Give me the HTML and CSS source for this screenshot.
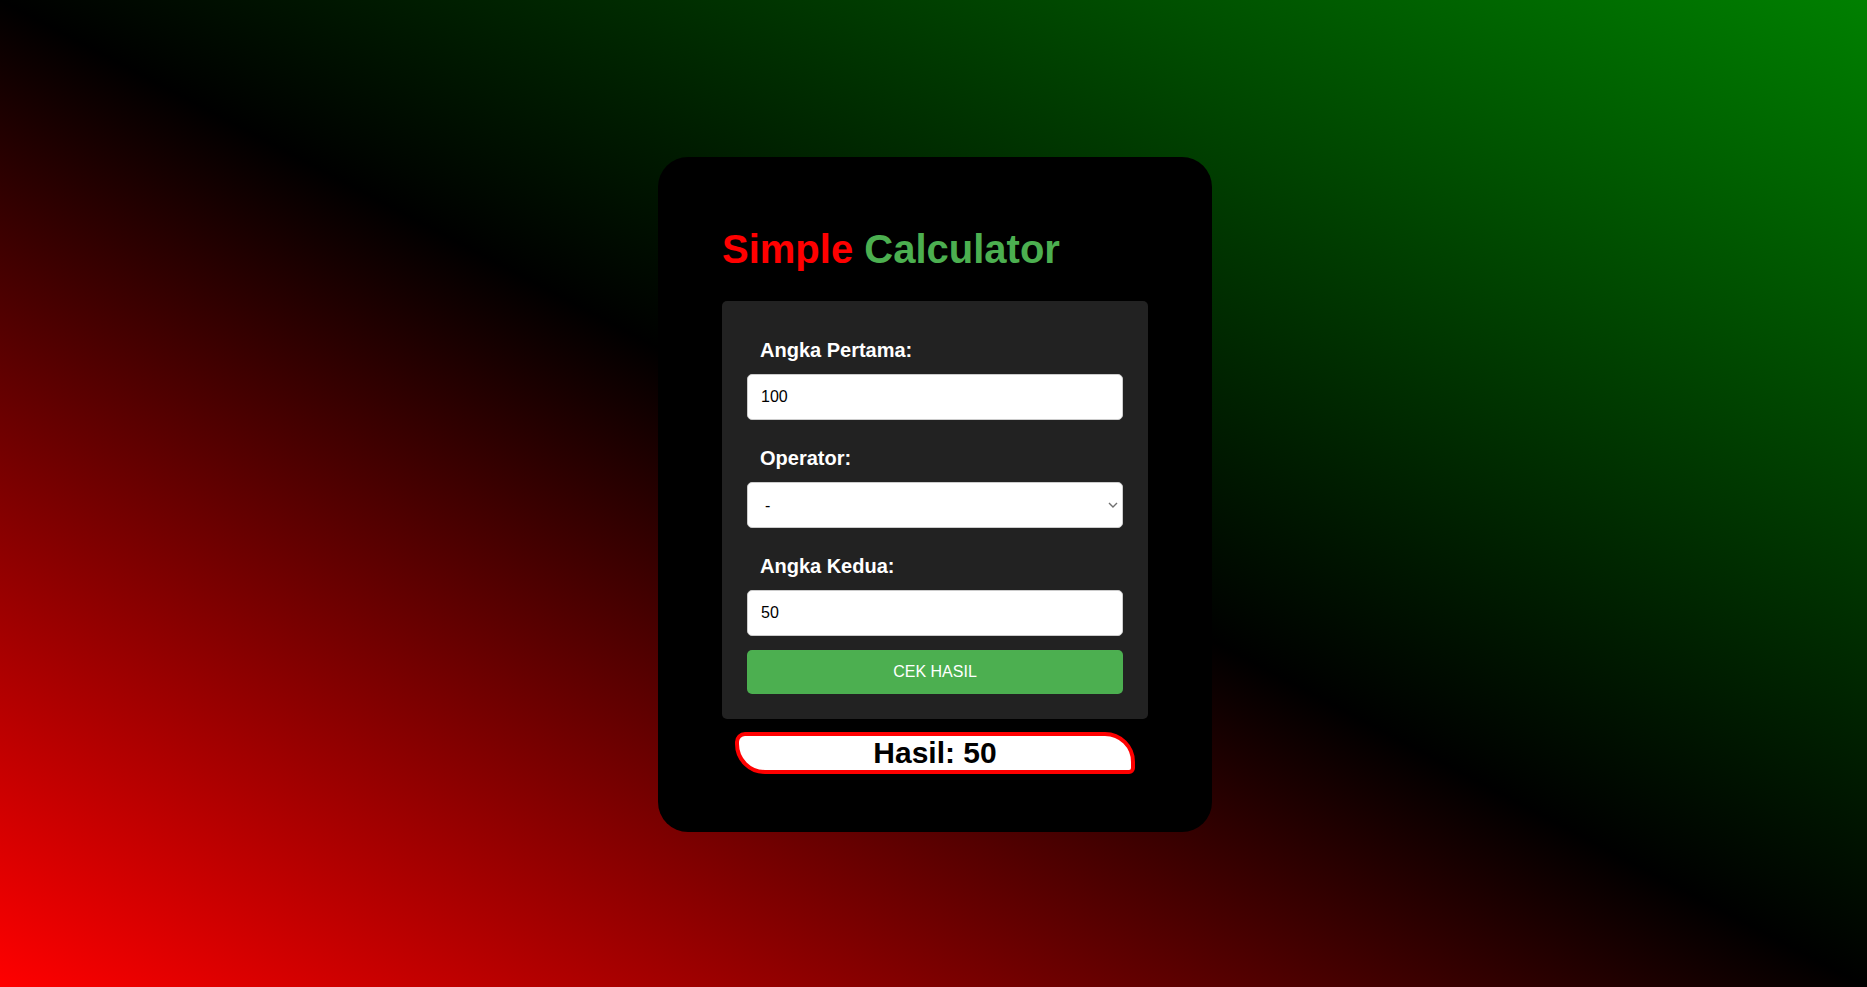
FILE: index.html
```html
<!DOCTYPE html>
<html lang="id">
<head>
<meta charset="utf-8">
<title>Simple Calculator</title>
<link rel="stylesheet" href="styles.css">
</head>
<body>
  <main class="card">
    <h1 class="title"><span class="title-red">Simple</span> <span class="title-green">Calculator</span></h1>
    <form class="panel">
      <label class="label" for="a">Angka Pertama:</label>
      <input class="field" id="a" type="number" value="100">
      <label class="label" for="op">Operator:</label>
      <select class="field field-select" id="op">
        <option>+</option>
        <option selected>-</option>
        <option>*</option>
        <option>/</option>
      </select>
      <label class="label" for="b">Angka Kedua:</label>
      <input class="field" id="b" type="number" value="50">
      <button class="btn" type="button">CEK HASIL</button>
    </form>
    <h2 class="result">Hasil: 50</h2>
  </main>
</body>
</html>
```
FILE: styles.css
```css
html, body {
  margin: 0;
  padding: 0;
  height: 100%;
}
body {
  font-family: "Liberation Sans", Arial, sans-serif;
  background: linear-gradient(to top right, #ff0000, #000000, #008000);
  display: flex;
  align-items: center;
  justify-content: center;
  min-height: 987px;
}
.card {
  box-sizing: border-box;
  width: 554px;
  background: #000;
  border-radius: 30px;
  padding: 69px 64px 58px 64px;
  margin-left: 3px;
  margin-top: 2px;
}
.title {
  margin: 0 0 29px 0;
  font-size: 40px;
  font-weight: bold;
  line-height: 46px;
  white-space: nowrap;
}
.title-red { color: #ff0000; }
.title-green { color: #4caf50; }
.panel {
  background: #222222;
  border-radius: 5px;
  padding: 25px;
  display: flex;
  flex-direction: column;
}
.label {
  display: block;
  color: #fff;
  font-weight: bold;
  font-size: 20px;
  line-height: 22px;
  margin: 13px 13px;
}
.field {
  box-sizing: border-box;
  width: 100%;
  height: 46px;
  margin: 0 0 14px 0;
  padding: 0 13px;
  border: 1px solid #cccccc;
  border-radius: 5px;
  background: #fff;
  color: #000;
  font-family: "Liberation Sans", Arial, sans-serif;
  font-size: 16px;
}
.field-select {
  -webkit-appearance: none;
  appearance: none;
  padding: 0 24px 0 17px;
  background: #fff url("data:image/svg+xml;utf8,<svg xmlns='http://www.w3.org/2000/svg' width='10' height='6' viewBox='0 0 10 6'><path d='M1 1 L5 5 L9 1' fill='none' stroke='%23707070' stroke-width='1.4'/></svg>") no-repeat right 4px center;
}
.btn {
  height: 44px;
  width: 100%;
  border: none;
  border-radius: 5px;
  background: #4caf50;
  color: #fff;
  font-family: "Liberation Sans", Arial, sans-serif;
  font-size: 16px;
  cursor: pointer;
}
.result {
  box-sizing: border-box;
  margin: 13px 13px 0 13px;
  height: 42px;
  background: #fff;
  border: 4px solid #ff0000;
  border-radius: 10px 30px 6px 30px;
  color: #000;
  font-size: 30px;
  font-weight: bold;
  line-height: 34px;
  text-align: center;
}
```
